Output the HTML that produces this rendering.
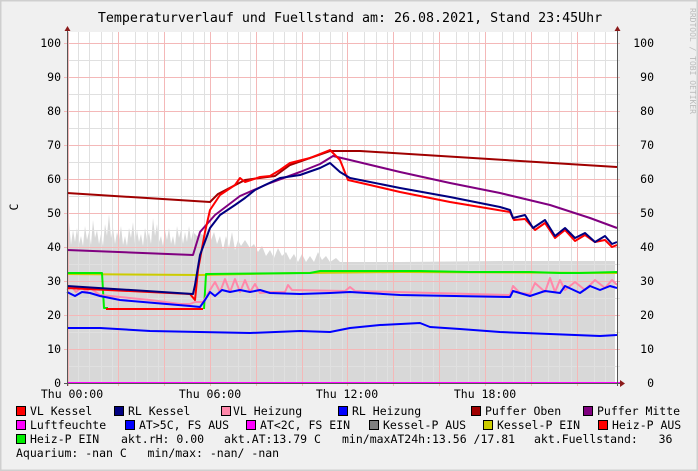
<!DOCTYPE html>
<html><head><meta charset="utf-8"><style>
html,body{margin:0;padding:0;background:#f0f0f0}
svg{display:block}
text{font-family:"DejaVu Sans Mono","Liberation Mono",monospace;fill:#000}
</style></head><body>
<svg width="698" height="471" viewBox="0 0 698 471" xmlns="http://www.w3.org/2000/svg">
<rect x="0" y="0" width="698" height="471" fill="#f0f0f0"/>
<rect x="0.5" y="0.5" width="697" height="470" fill="none" stroke="#cfcfcf" stroke-width="2"/>
<text x="350" y="22" font-size="13.3" text-anchor="middle">Temperaturverlauf und Fuellstand am: 26.08.2021, Stand 23:45Uhr</text>
<text transform="translate(690,8) rotate(90)" font-size="8" style="fill:#bbb">RRDTOOL / TOBI OETIKER</text>
<rect x="67" y="32" width="550" height="351" fill="#fff"/>
<polygon fill="#d8d8d8" points="67,383 67,240 69,222 71,245 73,230 75,242 77,228 79,244 81,236 83,246 85,226 87,240 89,232 91,245 93,220 95,238 97,230 99,244 101,234 103,246 105,224 107,236 109,214 111,238 113,228 115,244 117,232 119,240 121,226 123,245 125,236 127,246 129,228 131,238 133,222 135,244 137,230 139,242 141,234 143,246 145,228 147,240 149,232 151,244 153,218 155,236 157,224 159,242 161,236 163,246 165,230 167,240 169,228 171,244 173,236 175,246 177,226 179,238 181,230 183,244 185,232 187,242 189,226 191,240 193,232 197,236 201,234 205,236 208,228 211,240 214,232 217,244 220,236 223,250 226,236 229,248 232,232 235,250 238,240 241,246 245,240 250,248 254,244 258,252 262,246 266,256 270,250 274,258 278,248 282,256 286,252 290,260 294,254 298,262 302,254 306,262 310,256 314,262 318,252 322,260 326,256 330,262 336,258 340,262 400,262 500,261 615,261 615,383"/>
<g stroke="#e0e0e0" stroke-width="1">
<path d="M67.5 60.5H620M67.5 94.5H620M67.5 128.5H620M67.5 162.5H620M67.5 196.5H620M67.5 230.5H620M67.5 264.5H620M67.5 298.5H620M67.5 332.5H620M67.5 366.5H620"/>
<path d="M78.5 32V383M89.5 32V383M101.5 32V383M112.5 32V383M135.5 32V383M147.5 32V383M158.5 32V383M181.5 32V383M193.5 32V383M204.5 32V383M227.5 32V383M238.5 32V383M250.5 32V383M273.5 32V383M284.5 32V383M296.5 32V383M319.5 32V383M330.5 32V383M342.5 32V383M364.5 32V383M376.5 32V383M387.5 32V383M410.5 32V383M422.5 32V383M433.5 32V383M456.5 32V383M468.5 32V383M479.5 32V383M502.5 32V383M513.5 32V383M525.5 32V383M548.5 32V383M559.5 32V383M571.5 32V383M594.5 32V383M605.5 32V383"/>
</g>
<g stroke="#f4b8b8" stroke-width="1">
<path d="M64 43.5H620M64 77.5H620M64 111.5H620M64 145.5H620M64 179.5H620M64 213.5H620M64 247.5H620M64 281.5H620M64 315.5H620M64 349.5H620"/>
<path d="M68.5 32V386M118.5 32V386M164.5 32V386M210.5 32V386M256.5 32V386M302.5 32V386M347.5 32V386M393.5 32V386M439.5 32V386M485.5 32V386M531.5 32V386M577.5 32V386"/>
</g>
<g fill="none" stroke-width="2" stroke-linejoin="round">
<polyline stroke="#cccc00" points="67,274 200,275 300,273 400,272 617,273"/>
<polyline stroke="#00ee00" points="67,273 102,273 104,308 108,308"/>
<polyline stroke="#ff0000" points="106,309 203,309"/>
<polyline stroke="#00ee00" points="204,309 206,274 310,273 320,271 420,271 470,272 530,272 560,273 580,273 617,272"/>
<polyline stroke="#0000ff" points="67,328 100,328 150,331 200,332 250,333 300,331 330,332 350,328 380,325 420,323 430,327 460,329 500,332 550,334 600,336 617,335"/>
<polyline stroke="#ff88aa" points="67,290 72,287 76,292 82,287 86,292 90,288 100,295 150,300 180,304 190,304 195,302 203,302 210,290 215,282 220,292 225,279 230,292 235,279 240,292 245,280 250,292 255,284 260,293 270,292 285,292 288,285 292,290 345,291 350,287 355,291 510,295 513,286 520,293 530,294 535,283 545,292 550,278 555,292 560,280 565,290 575,282 585,290 595,280 605,288 612,280 617,285"/>
<polyline stroke="#0000ff" points="67,292 75,296 82,292 90,293 100,296 120,300 190,306 200,307 205,300 210,292 215,296 222,290 230,292 240,290 250,292 260,290 270,293 300,294 330,293 350,292 400,295 510,297 513,291 530,296 545,291 560,293 565,286 580,293 590,286 600,290 610,286 617,288"/>
<polyline stroke="#a00000" points="67,193 210,202 218,194 245,180 275,176 290,165 310,158 330,151 360,151 617,167"/>
<polyline stroke="#800080" points="67,250 193,255 200,232 215,215 240,196 270,183 300,172 320,164 333,156 350,160 400,172 450,183 500,193 550,205 590,218 617,228"/>
<polyline stroke="#ff0000" points="67,288 190,294 195,300 198,270 205,232 210,210 220,195 235,185 240,178 245,182 260,177 270,176 280,170 290,163 310,158 330,150 340,160 348,180 370,185 400,192 450,202 480,207 510,212 514,220 525,219 535,230 545,223 555,238 565,230 575,241 585,235 595,242 605,240 612,247 617,245"/>
<polyline stroke="#000080" points="67,286 193,294 195,285 200,255 210,228 220,215 235,205 245,198 255,190 265,185 280,178 300,175 320,168 330,163 340,172 350,178 400,188 450,197 500,207 510,210 513,218 525,215 533,228 545,220 555,236 565,228 575,238 585,233 595,242 605,236 612,244 617,242"/>
</g>
<line x1="67" y1="383" x2="620" y2="383" stroke="#ff00ff" stroke-width="2"/>
<line x1="64" y1="383.5" x2="620" y2="383.5" stroke="#555" stroke-width="1"/>
<polygon points="620,380 625,383.5 620,387" fill="#8b1a1a"/>
<line x1="67.5" y1="30" x2="67.5" y2="386" stroke="#555"/>
<polygon points="64.5,31 67.5,26 70.5,31" fill="#8b1a1a"/>
<line x1="617.5" y1="30" x2="617.5" y2="386" stroke="#555"/>
<polygon points="614.5,31 617.5,26 620.5,31" fill="#8b1a1a"/>
<g font-size="11.5" text-anchor="end">
<text x="61" y="47">100</text><text x="61" y="81">90</text><text x="61" y="115">80</text><text x="61" y="149">70</text><text x="61" y="183">60</text><text x="61" y="217">50</text><text x="61" y="251">40</text><text x="61" y="285">30</text><text x="61" y="319">20</text><text x="61" y="353">10</text><text x="61" y="387">0</text>
<text x="654" y="47">100</text><text x="654" y="81">90</text><text x="654" y="115">80</text><text x="654" y="149">70</text><text x="654" y="183">60</text><text x="654" y="217">50</text><text x="654" y="251">40</text><text x="654" y="285">30</text><text x="654" y="319">20</text><text x="654" y="353">10</text><text x="654" y="387">0</text>
</g>
<text transform="translate(18,207) rotate(-90)" font-size="11.5" text-anchor="middle">C</text>
<g font-size="11.5" text-anchor="middle">
<text x="72" y="398">Thu 00:00</text><text x="210" y="398">Thu 06:00</text><text x="347" y="398">Thu 12:00</text><text x="485" y="398">Thu 18:00</text>
</g>
<g stroke="#000" stroke-width="1">
<rect x="16.5" y="406.5" width="9" height="9" fill="#ff0000"/>
<rect x="114.5" y="406.5" width="9" height="9" fill="#000080"/>
<rect x="221.5" y="406.5" width="9" height="9" fill="#ff88aa"/>
<rect x="338.5" y="406.5" width="9" height="9" fill="#0000ff"/>
<rect x="471.5" y="406.5" width="9" height="9" fill="#a00000"/>
<rect x="583.5" y="406.5" width="9" height="9" fill="#800080"/>
<rect x="16.5" y="420.5" width="9" height="9" fill="#ff00ff"/>
<rect x="125.5" y="420.5" width="9" height="9" fill="#0000ff"/>
<rect x="246.5" y="420.5" width="9" height="9" fill="#ff00ff"/>
<rect x="369.5" y="420.5" width="9" height="9" fill="#808080"/>
<rect x="483.5" y="420.5" width="9" height="9" fill="#cccc00"/>
<rect x="598.5" y="420.5" width="9" height="9" fill="#ff0000"/>
<rect x="16.5" y="434.5" width="9" height="9" fill="#00ee00"/>
</g>
<g font-size="11.5" style="white-space:pre">
<text x="30" y="415">VL Kessel</text><text x="128" y="415">RL Kessel</text><text x="233" y="415">VL Heizung</text><text x="352" y="415">RL Heizung</text><text x="485" y="415">Puffer Oben</text><text x="597" y="415">Puffer Mitte</text>
<text x="30" y="429">Luftfeuchte</text><text x="139" y="429">AT&gt;5C, FS AUS</text><text x="260" y="429">AT&lt;2C, FS EIN</text><text x="383" y="429">Kessel-P AUS</text><text x="497" y="429">Kessel-P EIN</text><text x="612" y="429">Heiz-P AUS</text>
<text x="30" y="443">Heiz-P EIN</text><text x="121" y="443">akt.rH: 0.00</text><text x="224" y="443">akt.AT:13.79 C</text><text x="342" y="443">min/maxAT24h:13.56 /17.81</text><text x="534" y="443" xml:space="preserve">akt.Fuellstand:   36</text>
<text x="16" y="457" xml:space="preserve">Aquarium: -nan C   min/max: -nan/ -nan</text>
</g>
</svg>
</body></html>
